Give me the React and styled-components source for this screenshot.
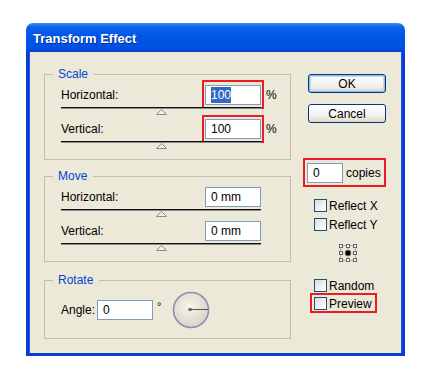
import styled, { createGlobalStyle } from "styled-components";

const GlobalStyle = createGlobalStyle`
  html, body {
    margin: 0;
    background: #ffffff;
  }
  body {
    font-family: "Liberation Sans", Arial, sans-serif;
    font-size: 12px;
    color: #000;
  }
`;

const Window = styled.div`
  margin: 23px 0 0 26px;
  width: 379px;
`;

const TitleBar = styled.div`
  height: 29px;
  box-sizing: border-box;
  padding: 2px 0 0 7px;
  display: flex;
  align-items: center;
  border-radius: 7px 7px 0 0;
  background: linear-gradient(
    to bottom,
    #3d8ef9 0%,
    #0a61ee 14%,
    #0056e6 45%,
    #0053e3 80%,
    #0045d2 100%
  );
  color: #fff;
  font-weight: bold;
  font-size: 13px;
  text-shadow: 1px 1px 0 #0b2a8c;
`;

const Body = styled.div`
  display: flex;
  height: 301px;
  padding: 0 16px 0 15px;
  background: #ece9d8;
  border: 3px solid #0a3ad8;
  border-top: none;
  box-shadow: inset 1px 0 0 #1f55e6, inset -1px 0 0 #1f55e6;
`;

const LeftColumn = styled.div`
  width: 247px;
  padding-top: 15px;
  display: flex;
  flex-direction: column;
`;

const RightColumn = styled.div`
  width: 78px;
  margin-left: 17px;
  padding-top: 22px;
  display: flex;
  flex-direction: column;
  align-items: flex-start;
`;

const Group = styled.fieldset`
  margin: ${(p) => p.$top || 0}px 0 0 0;
  padding: 0 10px 10px 16px;
  border: 1px solid #c2bfb0;
  min-width: 0;
`;

const Legend = styled.legend`
  margin-left: -8px;
  padding: 0 6px 0 5px;
  line-height: 14px;
  color: #0046d5;
`;

const Row = styled.div`
  display: flex;
  align-items: center;
  height: ${(p) => p.$h || 20}px;
  margin-top: 4px;
`;

const Label = styled.span`
  flex: 1;
`;

const Field = styled.div`
  width: ${(p) => p.$w || 56}px;
  height: 20px;
  box-sizing: border-box;
  padding-left: 5px;
  border: 1px solid #7f9db9;
  background: #fff;
  line-height: 18px;
  white-space: nowrap;
`;

const Selected = styled.span`
  background: #316ac5;
  color: #fff;
  padding: 1px 0;
`;

const Unit = styled.span`
  width: 14px;
  margin-left: 5px;
`;

const Highlight = styled.div`
  display: inline-flex;
  align-items: center;
  border: 2px solid #ec1c24;
  padding: ${(p) => p.$pad};
  margin: ${(p) => p.$margin};
`;

const SliderWrap = styled.div`
  width: 200px;
  margin-top: 2px;
  display: flex;
  flex-direction: column;
  align-items: center;
`;

const Track = styled.div`
  align-self: stretch;
  height: 1px;
  background: #111;
  box-shadow: 0 1px 0 #8b8b8b;
`;

const Thumb = styled.svg`
  display: block;
  margin-top: 1px;
`;

const AngleLabel = styled.span`
  margin-right: 2px;
`;

const Degree = styled.span`
  width: 19px;
  padding-left: 4px;
  box-sizing: border-box;
  align-self: flex-start;
  margin-top: 9px;
  font-size: 11px;
`;

const Button = styled.button`
  width: 78px;
  height: 19px;
  margin-top: ${(p) => p.$top || 0}px;
  padding: 0;
  border: 1px solid #003c74;
  border-radius: 3px;
  background: linear-gradient(to bottom, #ffffff 0%, #f3f2ee 60%, #e3e0d6 90%, #d6d0c5 100%);
  box-shadow: ${(p) =>
    p.$default ? "inset 0 0 0 1px #98b8ea, inset 0 0 0 2px #c5d6f4" : "none"};
  font-family: "Liberation Sans", Arial, sans-serif;
  font-size: 12px;
  color: #000;
`;

const CopiesText = styled.span`
  margin-left: 3px;
`;

const CheckRow = styled.label`
  display: flex;
  align-items: center;
  height: 13px;
  margin-top: ${(p) => p.$top || 0}px;
  margin-left: ${(p) => p.$left ?? 6}px;
`;

const Box = styled.span`
  width: 13px;
  height: 13px;
  box-sizing: border-box;
  border: 1px solid #1c5180;
  background: linear-gradient(135deg, #dcdcd7 0%, #f4f4f0 60%, #ffffff 100%);
`;

const CheckText = styled.span`
  margin-left: 2px;
`;

const Locator = styled.svg`
  display: block;
  margin: 12px 0 0 30px;
`;

function Slider() {
  return (
    <SliderWrap>
      <Track />
      <Thumb width="11" height="6" viewBox="0 0 11 6">
        <polygon points="5.5,0.5 10.5,5.5 0.5,5.5" fill="#f4f2ea" stroke="#8a8a8a" />
      </Thumb>
    </SliderWrap>
  );
}

function InputRow({ label, children, unit }) {
  return (
    <Row>
      <Label>{label}</Label>
      {children}
      <Unit>{unit}</Unit>
    </Row>
  );
}

function Check({ label, top }) {
  return (
    <CheckRow $top={top}>
      <Box />
      <CheckText>{label}</CheckText>
    </CheckRow>
  );
}

function Dial() {
  return (
    <svg width="38" height="38" viewBox="0 0 38 38">
      <defs>
        <radialGradient id="dialFill" cx="0.45" cy="0.4" r="0.6">
          <stop offset="0" stopColor="#f6f4ec" />
          <stop offset="1" stopColor="#d9d6c6" />
        </radialGradient>
      </defs>
      <circle cx="19" cy="19" r="17.5" fill="url(#dialFill)" stroke="#8991b5" strokeWidth="1.6" />
      <line x1="18" y1="18.5" x2="36" y2="18.5" stroke="#555" strokeWidth="1" />
      <rect x="16.5" y="17" width="3" height="3" fill="#666" />
    </svg>
  );
}

function ReferencePoint() {
  const spots = [1, 8, 15];
  return (
    <Locator width="20" height="20" viewBox="0 0 20 20">
      <rect x="2.5" y="2.5" width="15" height="15" fill="none" stroke="#6e6e6e" strokeDasharray="1 1" />
      <line x1="10" y1="2.5" x2="10" y2="17.5" stroke="#6e6e6e" strokeDasharray="1 1" />
      <line x1="2.5" y1="10" x2="17.5" y2="10" stroke="#6e6e6e" strokeDasharray="1 1" />
      {spots.map((y) =>
        spots.map((x) =>
          x === 8 && y === 8 ? (
            <rect key={`${x}-${y}`} x="7.5" y="7.5" width="5" height="5" fill="#000" />
          ) : (
            <rect key={`${x}-${y}`} x={x + 0.5} y={y + 0.5} width="3" height="3" fill="#fff" stroke="#666" />
          )
        )
      )}
    </Locator>
  );
}

export default function App() {
  return (
    <>
      <GlobalStyle />
      <Window>
        <TitleBar>Transform Effect</TitleBar>
        <Body>
          <LeftColumn>
            <Group>
              <Legend>Scale</Legend>
              <InputRow label="Horizontal:" unit="%">
                <Highlight $pad="3px 1px 2px 1px" $margin="-5px -3px -4px -3px">
                  <Field>
                    <Selected>100</Selected>
                  </Field>
                </Highlight>
              </InputRow>
              <Slider />
              <InputRow label="Vertical:" unit="%">
                <Highlight $pad="2px 1px 2px 1px" $margin="-4px -3px -4px -3px">
                  <Field>100</Field>
                </Highlight>
              </InputRow>
              <Slider />
            </Group>

            <Group $top={9}>
              <Legend>Move</Legend>
              <InputRow label="Horizontal:">
                <Field>0 mm</Field>
              </InputRow>
              <Slider />
              <InputRow label="Vertical:">
                <Field>0 mm</Field>
              </InputRow>
              <Slider />
            </Group>

            <Group $top={11}>
              <Legend>Rotate</Legend>
              <Row $h={37}>
                <AngleLabel>Angle:</AngleLabel>
                <Field>0</Field>
                <Degree>°</Degree>
                <Dial />
              </Row>
            </Group>
          </LeftColumn>

          <RightColumn>
            <Button $default>OK</Button>
            <Button $top={11}>Cancel</Button>
            <Highlight $pad="3px 3px 2px 2px" $margin="35px 0 0 -5px">
              <Field $w={36}>0</Field>
              <CopiesText>copies</CopiesText>
            </Highlight>
            <Check label="Reflect X" top={12} />
            <Check label="Reflect Y" top={6} />
            <ReferencePoint />
            <Check label="Random" top={16} />
            <Highlight $pad="2px 3px 1px 2px" $margin="1px 0 0 2px">
              <CheckRow $left={0}>
                <Box />
                <CheckText>Preview</CheckText>
              </CheckRow>
            </Highlight>
          </RightColumn>
        </Body>
      </Window>
    </>
  );
}
